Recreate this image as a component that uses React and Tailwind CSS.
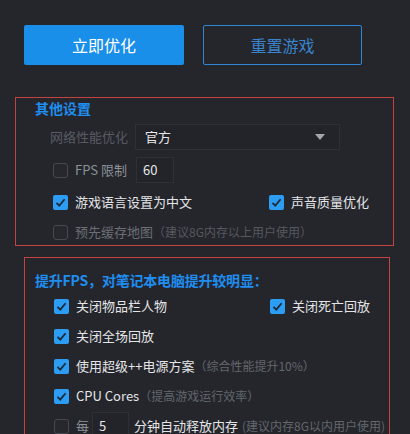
import React from "react";

const font = { fontFamily: '"Noto Sans CJK SC", "Noto Sans", sans-serif' };

function Check({ on }) {
  if (on)
    return (
      <span className="flex h-[15px] w-[15px] shrink-0 items-center justify-center rounded-[2px] bg-[#2c9df2]">
        <svg width="11" height="11" viewBox="0 0 11 11">
          <polyline
            points="1.5,5.8 4.3,8.6 9.6,2.2"
            fill="none"
            stroke="#1d2a3b"
            strokeWidth="1.8"
          />
        </svg>
      </span>
    );
  return (
    <span className="block h-[15px] w-[15px] shrink-0 rounded-[3px] border border-[#464950] bg-[#26282e]" />
  );
}

function Item({ on, children }) {
  return (
    <div className="flex items-center gap-[7px]">
      <Check on={on} />
      <span className="whitespace-nowrap text-[13px] text-[#e4e5e7]">{children}</span>
    </div>
  );
}

export default function App() {
  return (
    <div
      className="h-[434px] w-[410px] overflow-hidden bg-[#24262c] pt-[25px]"
      style={font}
    >
      {/* top buttons */}
      <div className="ml-[24px] flex gap-[19px]">
        <button className="h-[40px] w-[160px] rounded-[2px] bg-[#1a8fe9] text-[16px] text-white">
          立即优化
        </button>
        <button className="h-[40px] w-[159px] rounded-[2px] border border-[#2f86d6] text-[16px] text-[#3a84cc]">
          重置游戏
        </button>
      </div>

      {/* 其他设置 */}
      <div className="ml-[15px] mt-[32px] h-[149px] w-[379px] border border-[#c4423f]">
        <div className="h-[20px] pl-[19px] text-[14px] font-bold leading-[20px] text-[#1f8ef0]">
          其他设置
        </div>
        <div className="mt-[6px] flex h-[26px] items-center pl-[34px]">
          <span className="w-[85px] text-[13px] text-[#585b62]">网络性能优化</span>
          <div className="flex h-[26px] w-[205px] items-center justify-between border border-[#2d3036] bg-[#22242a] pl-[9px] pr-[14px]">
            <span className="text-[13px] text-[#e8e8e8]">官方</span>
            <svg width="10" height="6" viewBox="0 0 10 6">
              <polygon points="0,0 10,0 5,6" fill="#a3a6ab" />
            </svg>
          </div>
        </div>
        <div className="mt-[7px] flex h-[26px] items-center pl-[37px]">
          <div className="flex w-[83px] items-center gap-[7px]">
            <Check />
            <span className="text-[13px] text-[#8e9197]">FPS 限制</span>
          </div>
          <div className="flex h-[26px] w-[38px] items-center border border-[#2d3036] bg-[#22242a] pl-[6px] text-[13px] text-[#e8e8e8]">
            60
          </div>
        </div>
        <div className="mt-[6px] grid h-[26px] grid-cols-[216px_1fr] items-center pl-[37px]">
          <Item on>游戏语言设置为中文</Item>
          <Item on>声音质量优化</Item>
        </div>
        <div className="mt-[4px] flex h-[26px] items-center gap-[7px] pl-[37px]">
          <Check />
          <span className="whitespace-nowrap text-[13px] text-[#6b6e75]">
            预先缓存地图
            <span className="text-[12px] text-[#55585f]">（建议8G内存以上用户使用）</span>
          </span>
        </div>
      </div>

      {/* 提升FPS */}
      <div className="ml-[24px] mt-[11px] h-[200px] w-[366px] border border-[#c4423f] pt-[12px]">
        <div className="h-[20px] whitespace-nowrap pl-[10px] text-[14px] font-bold leading-[20px] tracking-[-0.2px] text-[#1f8ef0]">
          提升FPS，对笔记本电脑提升较明显：
        </div>
        <div className="mt-[1px] pl-[29px]">
          <div className="grid h-[30px] grid-cols-[216px_1fr] items-center">
            <Item on>关闭物品栏人物</Item>
            <Item on>关闭死亡回放</Item>
          </div>
          <div className="flex h-[30px] items-center">
            <Item on>关闭全场回放</Item>
          </div>
          <div className="flex h-[30px] items-center gap-[7px]">
            <Check on />
            <span className="whitespace-nowrap text-[13px] text-[#e4e5e7]">
              使用超级++电源方案
              <span className="text-[12px] text-[#63666d]">（综合性能提升10%）</span>
            </span>
          </div>
          <div className="flex h-[30px] items-center gap-[7px]">
            <Check on />
            <span className="whitespace-nowrap text-[13px] text-[#e4e5e7]">
              CPU Cores
              <span className="text-[12px] text-[#63666d]">（提高游戏运行效率）</span>
            </span>
          </div>
          <div className="flex h-[30px] items-center">
            <Check />
            <span className="ml-[7px] text-[13px] text-[#8e9197]">每</span>
            <div className="ml-[3px] flex h-[28px] w-[37px] shrink-0 items-center border border-[#2d3036] bg-[#22242a] pl-[6px] text-[13px] text-[#e8e8e8]">
              5
            </div>
            <span className="ml-[5px] whitespace-nowrap text-[13px] text-[#e4e5e7]">
              分钟自动释放内存
              <span className="ml-[4px] text-[12px] text-[#63666d]">(建议内存8G以内用户使用)</span>
            </span>
          </div>
        </div>
      </div>
    </div>
  );
}
